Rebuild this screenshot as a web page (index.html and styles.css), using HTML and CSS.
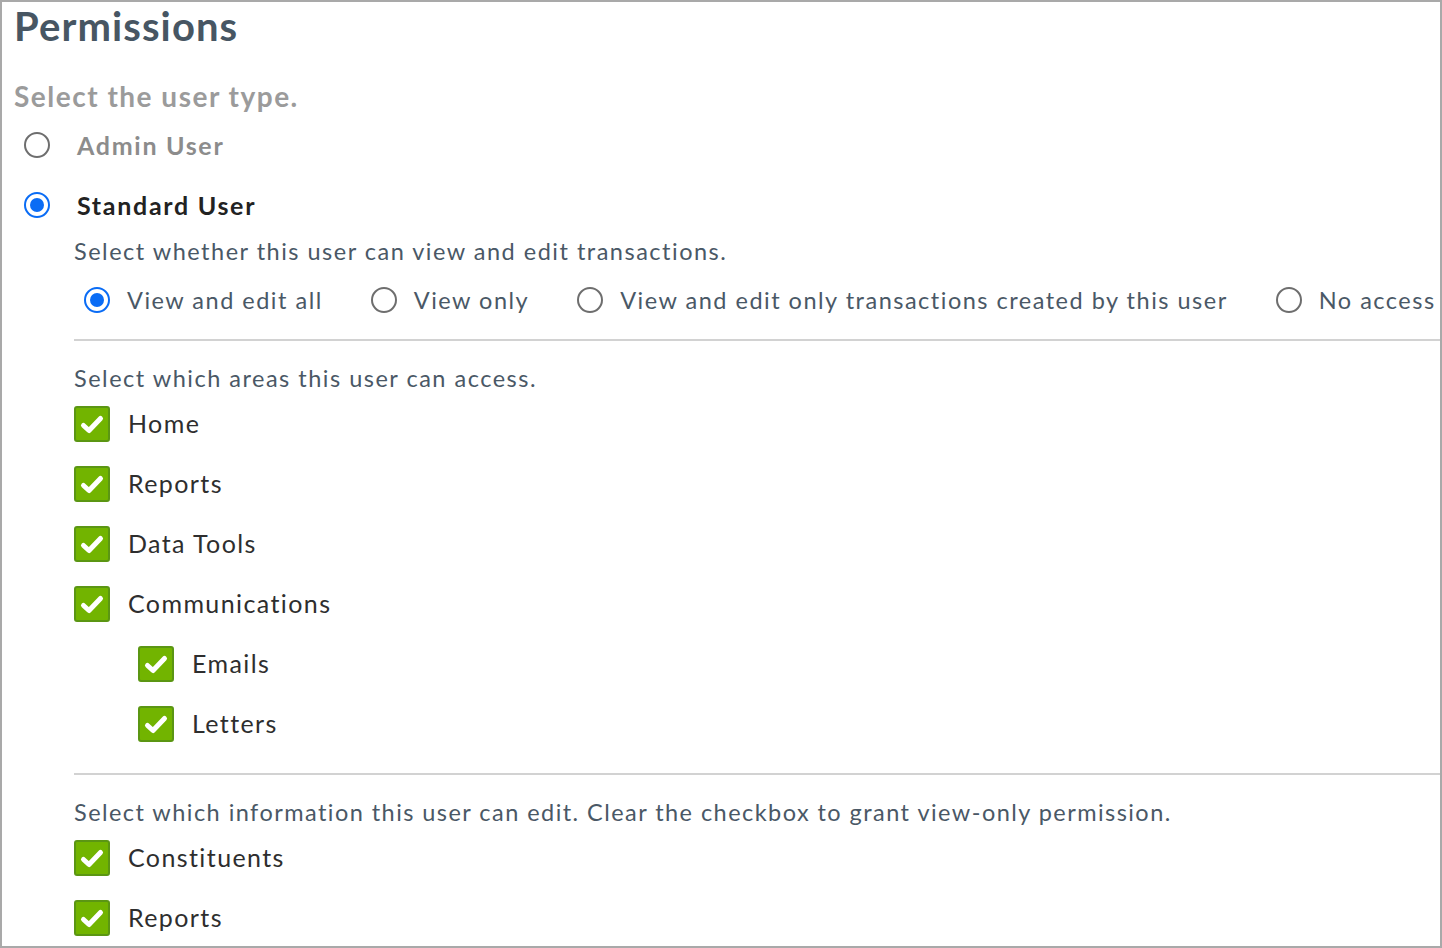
FILE: index.html
```html
<!DOCTYPE html>
<html lang="en">
<head>
<meta charset="utf-8">
<title>Permissions</title>
<link rel="stylesheet" href="styles.css">
</head>
<body>
<div class="frame">
  <h1 class="title">Permissions</h1>
  <div class="type-label">Select the user type.</div>
  <div class="user-radio">
    <span class="radio"></span>
    <span class="user-name muted">Admin User</span>
  </div>
  <div class="user-radio">
    <span class="radio checked"></span>
    <span class="user-name">Standard User</span>
  </div>
  <div class="nested">
    <div class="desc">Select whether this user can view and edit transactions.</div>
    <div class="sub-radios">
      <div class="sub-radio"><span class="radio checked"></span><span class="sub-label">View and edit all</span></div>
      <div class="sub-radio"><span class="radio"></span><span class="sub-label">View only</span></div>
      <div class="sub-radio"><span class="radio"></span><span class="sub-label">View and edit only transactions created by this user</span></div>
      <div class="sub-radio"><span class="radio"></span><span class="sub-label">No access</span></div>
    </div>
    <hr class="rule rule-one">
    <div class="desc desc-areas">Select which areas this user can access.</div>
    <div class="check-row"><span class="check"><svg viewBox="2 2 32 32"><polyline points="9.5,19.5 15,24.5 26.5,12.5"/></svg></span><span class="check-label">Home</span></div>
    <div class="check-row"><span class="check"><svg viewBox="2 2 32 32"><polyline points="9.5,19.5 15,24.5 26.5,12.5"/></svg></span><span class="check-label">Reports</span></div>
    <div class="check-row"><span class="check"><svg viewBox="2 2 32 32"><polyline points="9.5,19.5 15,24.5 26.5,12.5"/></svg></span><span class="check-label">Data Tools</span></div>
    <div class="check-row"><span class="check"><svg viewBox="2 2 32 32"><polyline points="9.5,19.5 15,24.5 26.5,12.5"/></svg></span><span class="check-label">Communications</span></div>
    <div class="check-row sub"><span class="check"><svg viewBox="2 2 32 32"><polyline points="9.5,19.5 15,24.5 26.5,12.5"/></svg></span><span class="check-label">Emails</span></div>
    <div class="check-row sub"><span class="check"><svg viewBox="2 2 32 32"><polyline points="9.5,19.5 15,24.5 26.5,12.5"/></svg></span><span class="check-label">Letters</span></div>
    <hr class="rule rule-two">
    <div class="desc desc-info">Select which information this user can edit. Clear the checkbox to grant view-only permission.</div>
    <div class="check-row"><span class="check"><svg viewBox="2 2 32 32"><polyline points="9.5,19.5 15,24.5 26.5,12.5"/></svg></span><span class="check-label">Constituents</span></div>
    <div class="check-row"><span class="check"><svg viewBox="2 2 32 32"><polyline points="9.5,19.5 15,24.5 26.5,12.5"/></svg></span><span class="check-label">Reports</span></div>
  </div>
</div>
</body>
</html>
```

FILE: styles.css
```css
* { box-sizing: border-box; }
html, body { margin: 0; padding: 0; background: #fff; }
body { font-family: Lato, "Open Sans", sans-serif; }

.frame {
  width: 1442px;
  height: 948px;
  border: 2px solid #a9a9a9;
  padding-left: 12px;
  overflow: hidden;
}

.title {
  margin: 0;
  height: 48px;
  line-height: 48px;
  font-size: 40px;
  font-weight: 700;
  color: #475663;
  letter-spacing: 1.1px;
}

.type-label {
  margin-top: 27px;
  height: 38px;
  line-height: 38px;
  font-size: 28px;
  font-weight: 700;
  color: #9b9b9b;
  letter-spacing: 1.5px;
}

.user-radio {
  height: 60px;
  display: flex;
  align-items: center;
  padding-left: 10px;
  gap: 27px;
}

.user-name {
  font-size: 25px;
  font-weight: 700;
  color: #222;
  letter-spacing: 1.7px;
}
.user-name.muted { color: #8c8c8c; }

.radio {
  flex: none;
  width: 26px;
  height: 26px;
  border-radius: 50%;
  border: 2px solid #6e6e6e;
  background: #fff;
  position: relative;
}
.radio.checked {
  border-color: #0a6cf5;
}
.radio.checked::after {
  content: "";
  position: absolute;
  left: 4px;
  top: 4px;
  width: 14px;
  height: 14px;
  border-radius: 50%;
  background: #0a6cf5;
}

.nested {
  margin-left: 60px;
}

.desc {
  height: 32px;
  line-height: 32px;
  font-size: 23.5px;
  color: #4a5866;
  letter-spacing: 1.5px;
  white-space: nowrap;
}

.sub-radios {
  height: 66px;
  display: flex;
  align-items: center;
  padding-left: 10px;
  white-space: nowrap;
}
.sub-radio {
  display: flex;
  align-items: center;
  gap: 17px;
  margin-right: 48px;
}
.sub-label {
  font-size: 23.5px;
  color: #4a5866;
  letter-spacing: 1.5px;
}

.rule {
  margin: 0;
  border: 0;
  height: 2px;
  background: #d2d2d2;
  margin-right: -20px;
}
.rule-one { margin-top: 6px; }
.rule-two { margin-top: 19px; }

.desc-areas { margin-top: 21px; }
.desc-info { margin-top: 21px; letter-spacing: 1.45px; }

.check-row {
  height: 60px;
  display: flex;
  align-items: center;
  gap: 18px;
}
.check-row.sub { padding-left: 64px; }

.check {
  flex: none;
  width: 36px;
  height: 36px;
  border-radius: 3px;
  border: 2px solid #5b9613;
  background: #72b400;
  display: flex;
}
.check svg {
  width: 32px;
  height: 32px;
}
.check polyline {
  fill: none;
  stroke: #fff;
  stroke-width: 5;
  stroke-linecap: round;
  stroke-linejoin: round;
}

.check-label {
  font-size: 25px;
  color: #2e2e2e;
  letter-spacing: 1.4px;
  margin-top: -2px;
}
```
